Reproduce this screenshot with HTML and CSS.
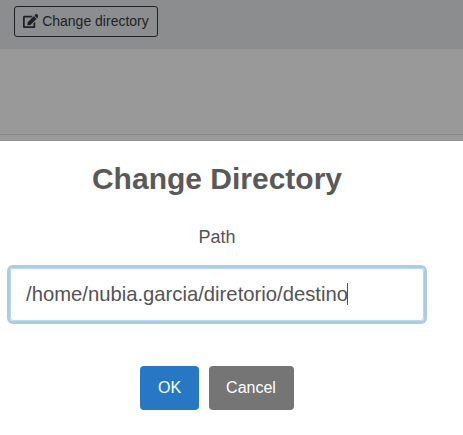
FILE: index.html
```html
<!DOCTYPE html>
<html lang="en">
<head>
<meta charset="utf-8">
<title>Change Directory</title>
<link rel="stylesheet" href="styles.css">
</head>
<body>
<header class="toolbar">
  <button class="change" type="button">
    <svg class="icon" viewBox="0 0 576 512" aria-hidden="true"><path fill="currentColor" d="M402.6 83.2l90.2 90.2c3.8 3.8 3.8 10 0 13.8L274.4 405.6l-92.8 10.3c-12.400 1.400-22.900-9.100-21.500-21.500l10.300-92.800L388.800 83.200c3.800-3.800 10-3.800 13.800 0zm162-22.900l-48.800-48.800c-15.200-15.200-39.900-15.200-55.200 0l-35.400 35.400c-3.800 3.800-3.800 10 0 13.800l90.200 90.200c3.800 3.800 10 3.800 13.800 0l35.400-35.400c15.200-15.300 15.200-40 0-55.200zM384 346.200V448H64V128h229.800c3.200 0 6.200-1.300 8.500-3.500l40-40c7.600-7.600 2.200-20.500-8.500-20.500H48C21.500 64 0 85.500 0 112v352c0 26.500 21.500 48 48 48h352c26.500 0 48-21.500 48-48V306.200c0-10.700-12.900-16-20.500-8.500l-40 40c-2.200 2.300-3.500 5.300-3.500 8.500z"/></svg>
    <span>Change directory</span>
  </button>
</header>
<div class="content"></div>
<main class="dialog">
  <h2 class="title">Change Directory</h2>
  <div class="label">Path</div>
  <div class="field"><span>/home/nubia.garcia/diretorio/destino</span><i class="caret"></i></div>
  <div class="actions">
    <button class="btn ok" type="button">OK</button>
    <button class="btn cancel" type="button">Cancel</button>
  </div>
</main>
</body>
</html>
```
FILE: styles.css
```css
* { box-sizing: border-box; }

body {
  margin: 0;
  height: 435px;
  overflow: hidden;
  background: #999;
  font-family: "Liberation Sans", Arial, sans-serif;
}

.toolbar {
  height: 49px;
  padding: 6px 14px;
  background: #8b8d8f;
}

.change {
  display: flex;
  align-items: center;
  gap: 3.8px;
  width: 144px;
  height: 31px;
  padding: 0 0 0 7.6px;
  border: 1px solid #1f2225;
  border-radius: 3px;
  background: transparent;
  color: #1f2225;
  font: 14px/21px "Liberation Sans", Arial, sans-serif;
  white-space: nowrap;
}

.icon {
  flex: none;
  width: 15.75px;
  height: 14px;
  margin-bottom: 2px;
}

.content {
  height: 86px;
  border-bottom: 1px solid #868686;
}

.dialog {
  margin-top: 6px;
  height: 294px;
  padding-right: 29px;
  background: #fff;
  color: #595959;
  text-align: center;
}

.title {
  margin: 0;
  padding-top: 20px;
  font-size: 30px;
  line-height: 36px;
  font-weight: 700;
}

.label {
  margin-top: 30px;
  font-size: 18px;
  line-height: 21px;
  color: #545454;
}

.field {
  display: flex;
  align-items: center;
  width: 414px;
  height: 53px;
  margin: 20px 0 0 10px;
  padding: 0 15px;
  border: 1px solid #b4dbed;
  border-radius: 3px;
  box-shadow: 0 0 0 3px #b0cae3;
  color: #545454;
  font-size: 20.25px;
  white-space: nowrap;
}

.caret {
  width: 1px;
  height: 22px;
  margin: 0 0 1px -1px;
  background: #545454;
}

.actions {
  display: flex;
  justify-content: center;
  gap: 10px;
  margin-top: 45px;
}

.btn {
  height: 44px;
  padding: 0;
  border: 0;
  border-radius: 4px;
  color: #fff;
  font: 16px "Liberation Sans", Arial, sans-serif;
}

.ok {
  width: 59px;
  background: #2778c4;
}

.cancel {
  width: 85px;
  padding-right: 1px;
  background: #757575;
}
```
